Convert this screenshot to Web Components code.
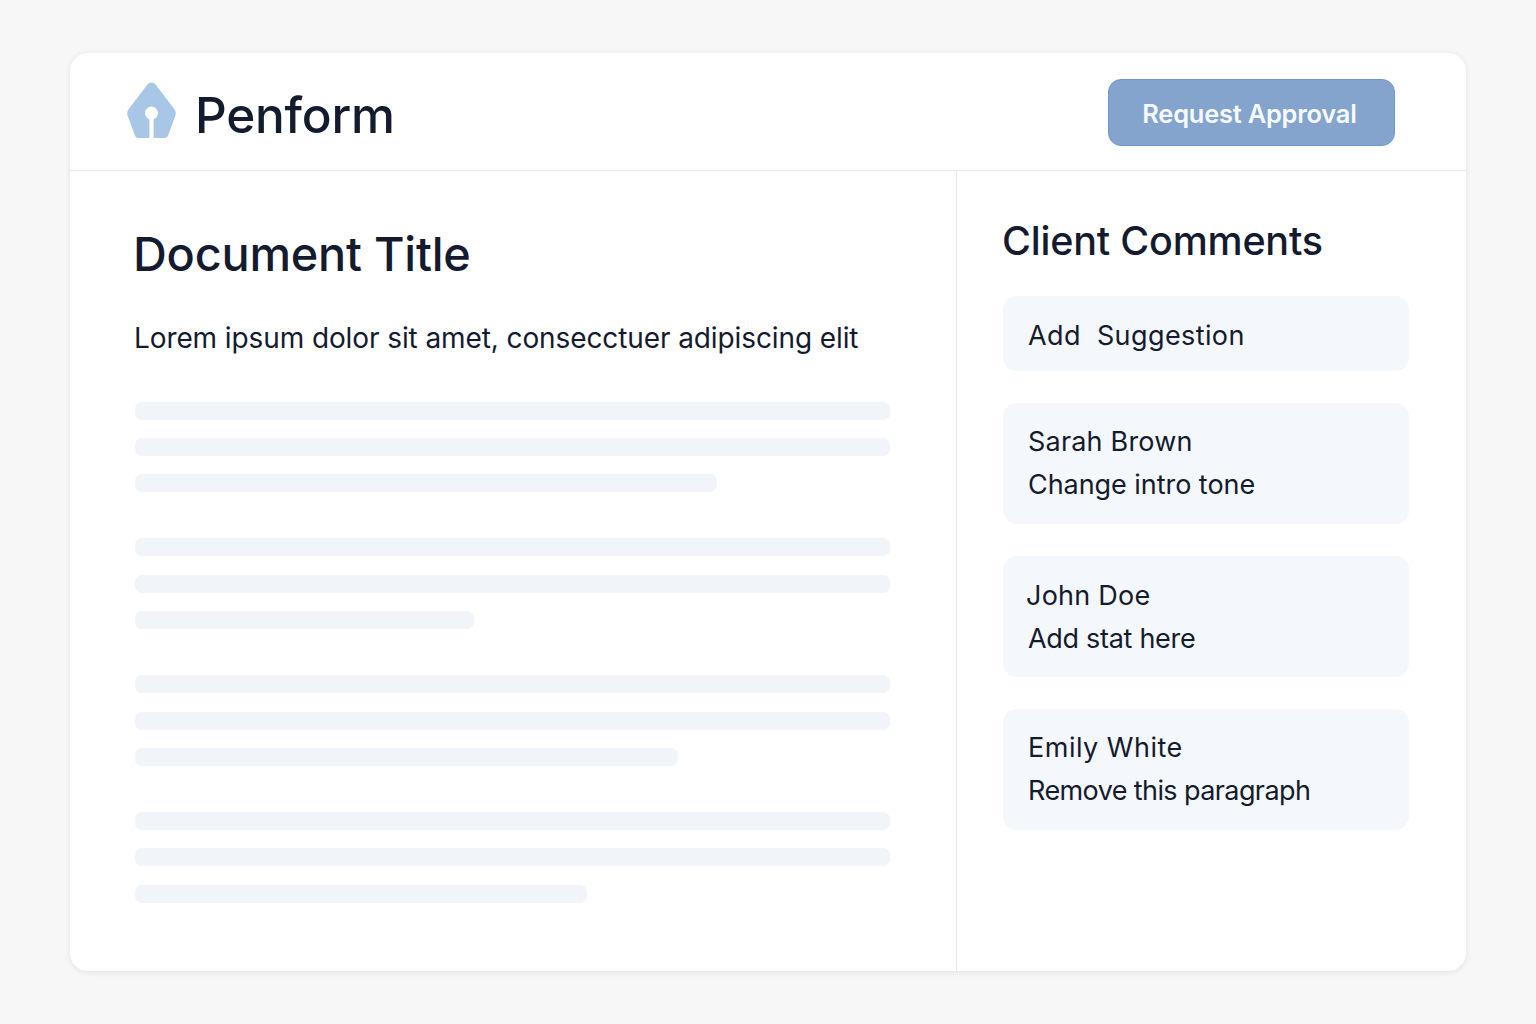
<!DOCTYPE html>
<html lang="en">
<head>
<meta charset="utf-8">
<title>Penform</title>
<style>
  html, body { margin: 0; height: 100%; }
  body {
    background: #f7f7f8;
    font-family: Inter, "Liberation Sans", sans-serif;
    color: #141b2e;
  }
</style>
</head>
<body>
<penform-app>
  <penform-header slot="header"></penform-header>
  <penform-document slot="main" heading="Document Title" lead="Lorem ipsum dolor sit amet, consecctuer adipiscing elit">
    <skeleton-para last="582"></skeleton-para>
    <skeleton-para last="339"></skeleton-para>
    <skeleton-para last="543"></skeleton-para>
    <skeleton-para last="452"></skeleton-para>
  </penform-document>
  <penform-comments slot="side" heading="Client Comments">
    <comment-card single style="--msg-track: .4px">Add&nbsp; Suggestion</comment-card>
    <comment-card author="Sarah Brown" style="--author-track: .2px; --msg-track: -.05px">Change intro tone</comment-card>
    <comment-card author="John Doe" style="--author-track: .25px; --author-shift: -2px; --msg-track: -.3px; padding-top: 2px">Add stat here</comment-card>
    <comment-card author="Emily White" style="--author-track: .5px; --msg-track: -.6px">Remove this paragraph</comment-card>
  </penform-comments>
</penform-app>

<script>
class PenformApp extends HTMLElement {
  constructor () {
    super();
    this.attachShadow({ mode: "open" });
    this.shadowRoot.innerHTML = /* html */ `
    <style>
      :host { display: block; padding: 53px 70px 0; }
      .card {
        width: 1396px;
        height: 918px;
        display: flex;
        flex-direction: column;
        background: #fff;
        border-radius: 18px;
        box-shadow: 0 1px 6px #00000018;
        overflow: hidden;
      }
      .body { flex: 1; display: grid; grid-template-columns: 887px 1fr; min-height: 0; }
      .main { border-right: 1px solid #e6eaef; }
    </style>
    <div class="card">
      <slot name="header"></slot>
      <div class="body">
        <div class="main"><slot name="main"></slot></div>
        <div class="side"><slot name="side"></slot></div>
      </div>
    </div>`;
  }
}

class PenformHeader extends HTMLElement {
  constructor () {
    super();
    this.attachShadow({ mode: "open" });
    this.shadowRoot.innerHTML = /* html */ `
    <style>
      :host {
        display: flex;
        align-items: center;
        justify-content: space-between;
        box-sizing: border-box;
        height: 118px;
        padding: 0 71px 0 57px;
        border-bottom: 1px solid #e3e8ee;
      }
      .brand { display: flex; align-items: center; gap: 18px; }
      svg { display: block; margin-bottom: 2px; }
      h1 { margin: 8px 0 0; font-size: 49.5px; line-height: 1; font-weight: 500; color: #141b2e; letter-spacing: -0.25px; }
      button {
        width: 287px;
        height: 67px;
        margin-top: 2px;
        padding: 2px 4px 0 0;
        border: 1px solid #6f97cb;
        border-radius: 13px;
        background: #84a4cd;
        color: #f6f9fd;
        font: 600 25.4px Inter, "Liberation Sans", sans-serif;
        letter-spacing: -0.2px;
      }
    </style>
    <div class="brand">
      <svg width="50" height="57" viewBox="0 0 50 57">
        <path fill="#a8c6e6" fill-rule="evenodd" d="M20.8 2 Q24.5 -1 28.2 2 L47.6 27.4 Q49.4 30 48.4 33.4 L41 53.8 Q40 56 37.8 56 L26.6 56 L26.6 37.15 A6.5 6.5 0 1 0 22.4 37.15 L22.4 56 L11.2 56 Q9 56 8 53.8 L0.6 33.4 Q-0.4 30 1.4 27.4 Z"/>
      </svg>
      <h1>Penform</h1>
    </div>
    <button type="button">Request Approval</button>`;
  }
}

class PenformDocument extends HTMLElement {
  constructor () {
    super();
    this.attachShadow({ mode: "open" });
    this.shadowRoot.innerHTML = /* html */ `
    <style>
      :host { display: block; padding: 55px 66px 0 65px; }
      h2 { margin: 0 0 0 -2px; font-size: 46.8px; line-height: 56px; font-weight: 500; color: #141b2e; letter-spacing: -0.2px; }
      p { margin: 38px 0 45.6px -1px; font-size: 28px; line-height: 36px; color: #141b2e; letter-spacing: -0.1px; }
      .bars { display: flex; flex-direction: column; gap: 46px; }
    </style>
    <h2></h2>
    <p></p>
    <div class="bars"><slot></slot></div>`;
  }

  connectedCallback () {
    this.shadowRoot.querySelector("h2").textContent = this.getAttribute("heading");
    this.shadowRoot.querySelector("p").textContent = this.getAttribute("lead");
  }
}

class SkeletonPara extends HTMLElement {
  constructor () {
    super();
    this.attachShadow({ mode: "open" });
    this.shadowRoot.innerHTML = /* html */ `
    <style>
      :host { display: flex; flex-direction: column; gap: 18.4px; }
      div { height: 18px; border-radius: 7px; background: #f1f4f8; }
    </style>
    <div></div><div></div><div class="last"></div>`;
  }

  connectedCallback () {
    this.shadowRoot.querySelector(".last").style.width = this.getAttribute("last") + "px";
  }
}

class PenformComments extends HTMLElement {
  constructor () {
    super();
    this.attachShadow({ mode: "open" });
    this.shadowRoot.innerHTML = /* html */ `
    <style>
      :host { display: block; padding: 45px 57px 0 46px; }
      h2 { margin: 0 0 30px -1px; font-size: 39.5px; line-height: 50px; font-weight: 500; color: #141b2e; letter-spacing: -0.22px; }
      .list { display: flex; flex-direction: column; gap: 32px; }
    </style>
    <h2></h2>
    <div class="list"><slot></slot></div>`;
  }

  connectedCallback () {
    this.shadowRoot.querySelector("h2").textContent = this.getAttribute("heading");
  }
}

class CommentCard extends HTMLElement {
  constructor () {
    super();
    this.attachShadow({ mode: "open" });
    this.shadowRoot.innerHTML = /* html */ `
    <style>
      :host {
        display: flex;
        flex-direction: column;
        justify-content: center;
        box-sizing: border-box;
        min-height: 121px;
        padding: 0 25px 1px;
        background: #f4f7fb;
        border-radius: 14px;
        font-size: 27px;
        line-height: 43px;
        color: #141b2e;
      }
      :host([single]) { min-height: 75px; padding-top: 5px; }
      .author { letter-spacing: var(--author-track, 0); margin-left: var(--author-shift, 0); }
      .msg { letter-spacing: var(--msg-track, 0); }
    </style>
    <div class="author"></div>
    <div class="msg"><slot></slot></div>`;
  }

  connectedCallback () {
    const author = this.shadowRoot.querySelector(".author");
    if (this.hasAttribute("author")) author.textContent = this.getAttribute("author");
    else author.remove();
  }
}

customElements.define("penform-app", PenformApp);
customElements.define("penform-header", PenformHeader);
customElements.define("penform-document", PenformDocument);
customElements.define("skeleton-para", SkeletonPara);
customElements.define("penform-comments", PenformComments);
customElements.define("comment-card", CommentCard);
</script>
</body>
</html>
